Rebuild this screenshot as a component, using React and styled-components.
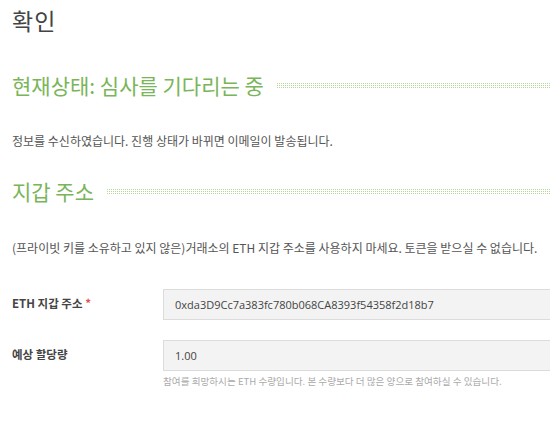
import React from "react";
import styled, { createGlobalStyle } from "styled-components";

const Global = createGlobalStyle`
  html, body { margin: 0; padding: 0; background: #fff; overflow: hidden; }
  body { font-family: "Noto Sans CJK KR", "Noto Sans", sans-serif; color: #555; }
`;

const Page = styled.div`
  width: 550px;
  padding: 4px 0 0 12px;
  box-sizing: border-box;
  overflow: hidden;
`;

const Title = styled.h1`
  margin: 0;
  font-size: 23px;
  font-weight: 400;
  color: #444;
  line-height: 32px;
  letter-spacing: 1px;
`;

const SectionHead = styled.div`
  display: flex;
  align-items: center;
  gap: 13px;
  margin-top: ${(p) => p.$top}px;
`;

const HeadText = styled.h2`
  margin: 0;
  font-size: 21px;
  font-weight: 400;
  color: #7ab55a;
  line-height: 30px;
  white-space: nowrap;
`;

const Dots = styled.div`
  flex: 1;
  height: 5px;
  background-image: repeating-linear-gradient(90deg, #b6d89c 0 1px, transparent 1px 2px);
  -webkit-mask-image: repeating-linear-gradient(180deg, #000 0 1px, transparent 1px 2px);
  mask-image: repeating-linear-gradient(180deg, #000 0 1px, transparent 1px 2px);
`;

const Note = styled.p`
  margin: ${(p) => p.$top}px 0 0;
  font-size: 12px;
  line-height: 16px;
  color: #555;
  white-space: nowrap;
`;

const Form = styled.div`
  margin-top: 33px;
  display: flex;
  flex-direction: column;
  gap: 20px;
`;

const Row = styled.div`
  display: grid;
  grid-template-columns: 151px 420px;
  align-items: start;
`;

const Label = styled.label`
  font-size: 11.5px;
  font-weight: 700;
  color: #444;
  padding-top: 6px;
  line-height: 16px;
`;

const Star = styled.span`
  color: #d9534f;
`;

const Field = styled.div`
  display: flex;
  flex-direction: column;
`;

const Input = styled.div`
  height: 31px;
  box-sizing: border-box;
  border: 1px solid #dcdcdc;
  background: #f3f3f3;
  padding: 0 11px;
  display: flex;
  align-items: center;
  font-family: "Open Sans", "Noto Sans CJK KR", sans-serif;
  font-size: 11px;
  color: #444;
`;

const Help = styled.div`
  margin-top: 3px;
  font-size: 9.6px;
  line-height: 14px;
  color: #aaa;
  white-space: nowrap;
`;

export default function App() {
  return (
    <Page>
      <Global />
      <Title>확인</Title>
      <SectionHead $top={34}>
        <HeadText>현재상태: 심사를 기다리는 중</HeadText>
        <Dots />
      </SectionHead>
      <Note $top={33}>정보를 수신하였습니다. 진행 상태가 바뀌면 이메일이 발송됩니다.</Note>
      <SectionHead $top={27}>
        <HeadText>지갑 주소</HeadText>
        <Dots />
      </SectionHead>
      <Note $top={34}>(프라이빗 키를 소유하고 있지 않은)거래소의 ETH 지갑 주소를 사용하지 마세요. 토큰을 받으실 수 없습니다.</Note>
      <Form>
        <Row>
          <Label>ETH 지갑 주소 <Star>*</Star></Label>
          <Field>
            <Input>0xda3D9Cc7a383fc780b068CA8393f54358f2d18b7</Input>
          </Field>
        </Row>
        <Row>
          <Label>예상 할당량</Label>
          <Field>
            <Input>1.00</Input>
            <Help>참여를 희망하시는 ETH 수량입니다. 본 수량보다 더 많은 양으로 참여하실 수 있습니다.</Help>
          </Field>
        </Row>
      </Form>
    </Page>
  );
}
